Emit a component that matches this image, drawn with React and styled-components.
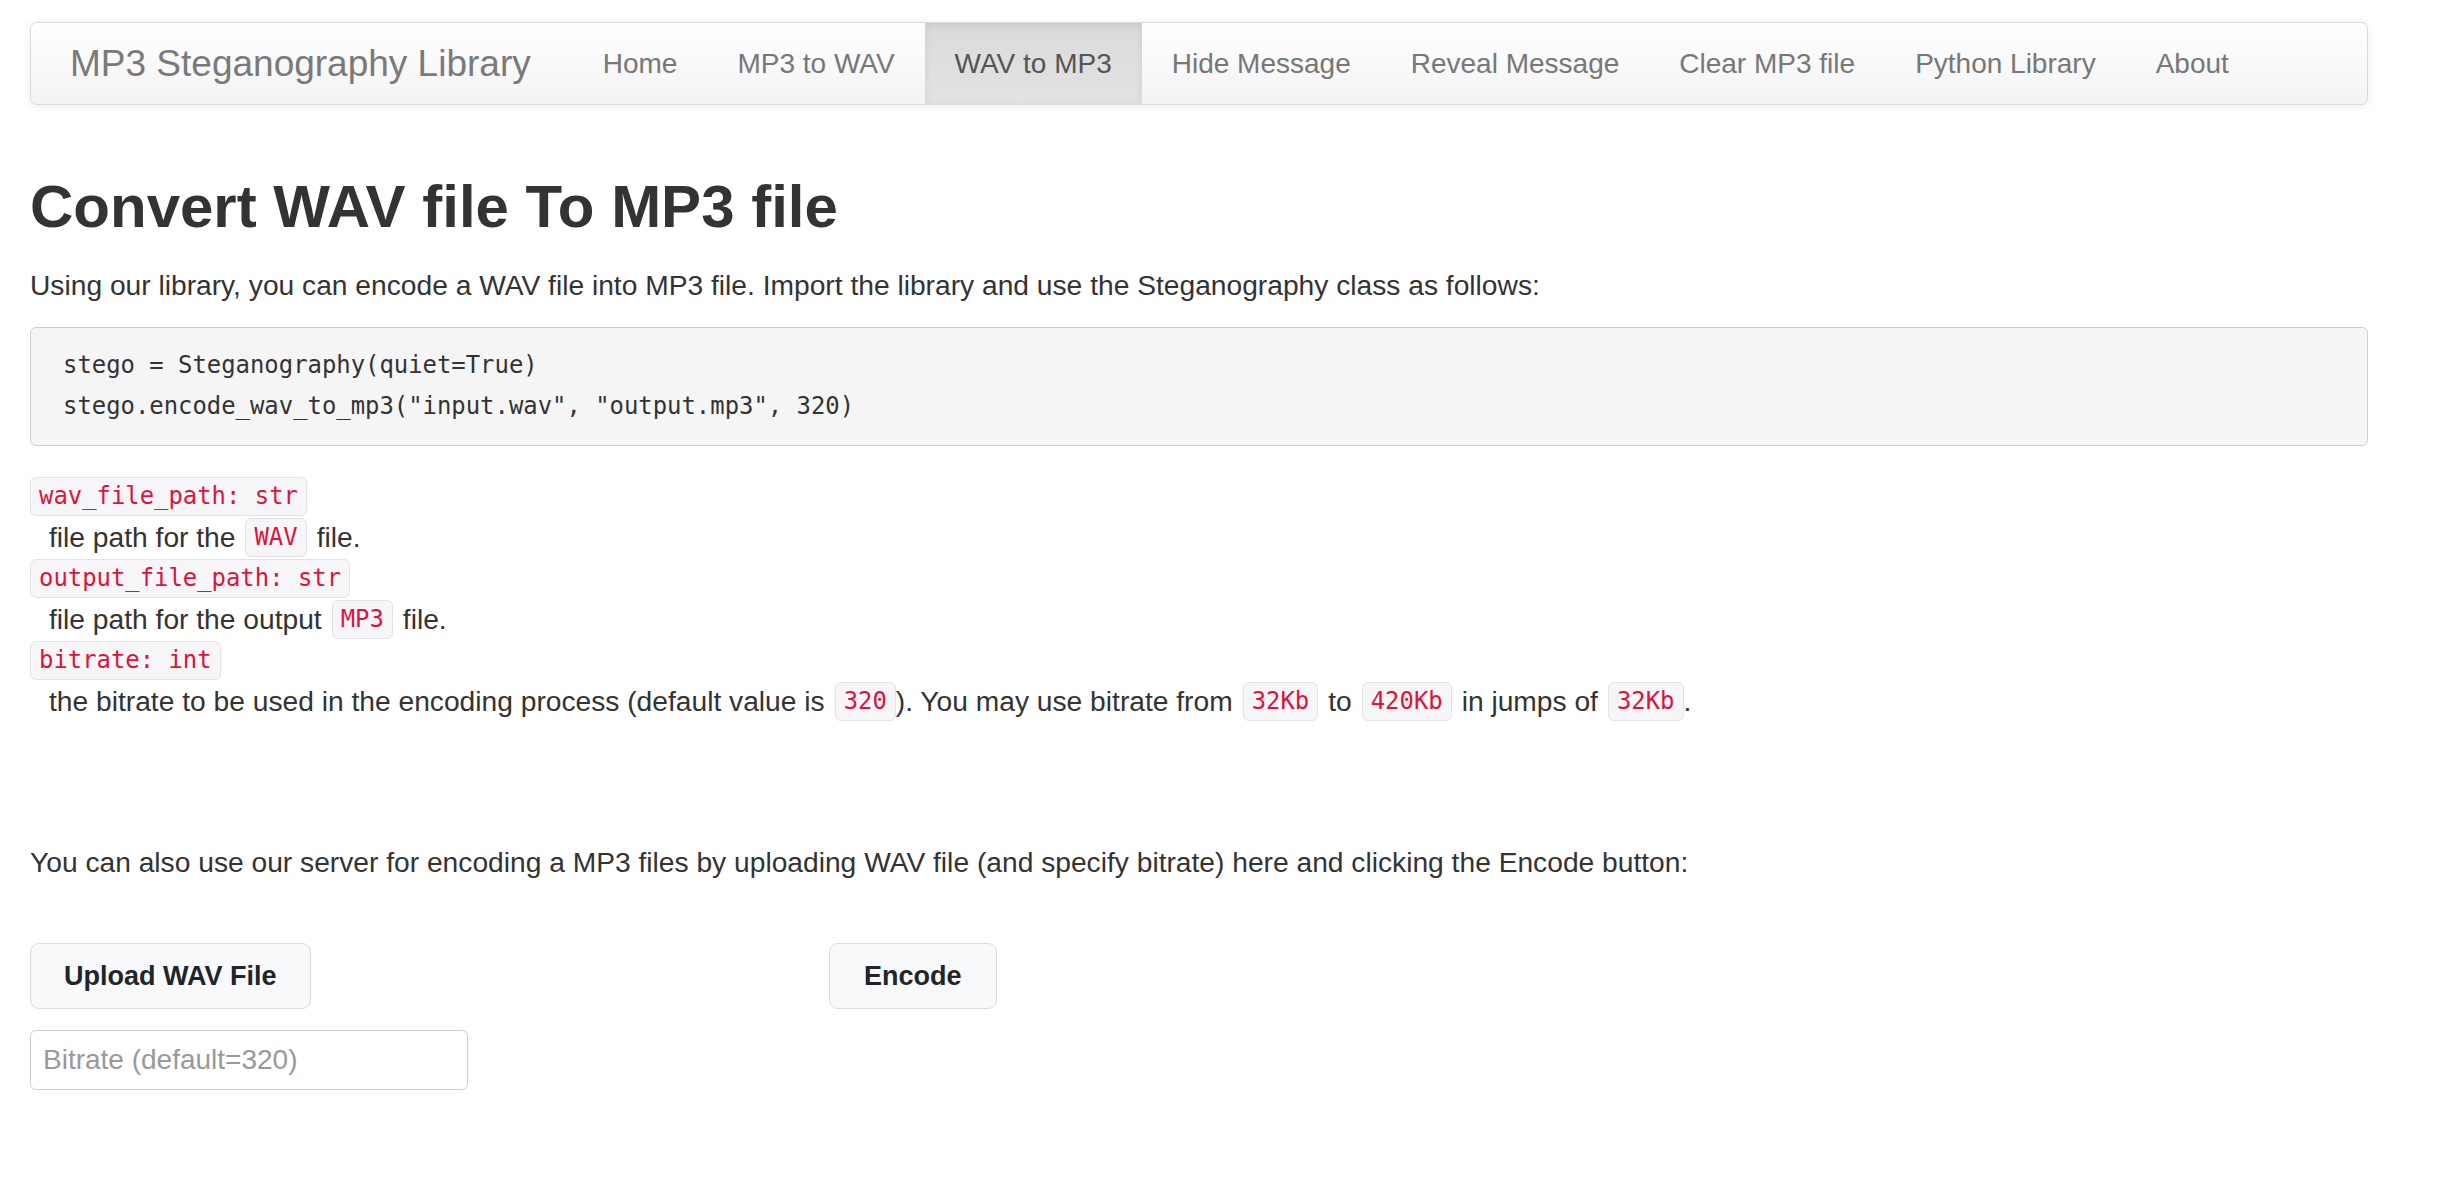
import React from "react";
import styled, { createGlobalStyle } from "styled-components";

const GlobalStyle = createGlobalStyle`
  html, body {
    margin: 0;
    padding: 0;
    background: #ffffff;
  }
  body {
    font-family: "Liberation Sans", Helvetica, Arial, sans-serif;
    color: #333333;
    font-size: 28px;
  }
  * { box-sizing: border-box; }
`;

const Page = styled.div`
  padding: 22px 76px 60px 30px;
`;

const Navbar = styled.nav`
  display: flex;
  align-items: stretch;
  height: 83px;
  border: 1.5px solid #d9d9d9;
  border-radius: 7px;
  background: linear-gradient(to bottom, #ffffff 0%, #f3f3f3 100%);
  box-shadow: 0 1.5px 8px rgba(0, 0, 0, 0.075);
  overflow: hidden;
`;

const Brand = styled.a`
  display: flex;
  align-items: center;
  padding-left: 39px;
  margin-right: 42px;
  font-size: 37px;
  font-weight: 300;
  color: #7a7a7a;
  text-decoration: none;
  white-space: nowrap;
`;

const NavList = styled.ul`
  display: flex;
  align-items: stretch;
  list-style: none;
  margin: 0;
  padding: 0;
`;

const NavItem = styled.li`
  display: flex;
  align-items: center;
  padding: 0 30px;
  font-size: 28px;
  white-space: nowrap;
  color: ${(p) => (p.$active ? "#555555" : "#777777")};
  background: ${(p) =>
    p.$active ? "linear-gradient(to bottom, #dbdbdb 0%, #e2e2e2 100%)" : "transparent"};
  box-shadow: ${(p) => (p.$active ? "inset 0 3px 9px rgba(0, 0, 0, 0.075)" : "none")};
`;

const Main = styled.main`
  display: flex;
  flex-direction: column;
`;

const Title = styled.h1`
  margin: 70px 0 0;
  font-size: 60px;
  line-height: 64px;
  font-weight: 700;
  color: #333333;
`;

const Paragraph = styled.p`
  margin: ${(p) => p.$margin || "0"};
  font-size: 28.2px;
  line-height: 41px;
  color: #333333;
`;

const CodeBlock = styled.pre`
  margin: 21.5px 0 0;
  padding: 17px 32px 18px;
  background: #f5f5f5;
  border: 1.5px solid #cccccc;
  border-radius: 6px;
  font-family: "DejaVu Sans Mono", Menlo, monospace;
  font-size: 23.9px;
  line-height: 41px;
  color: #333333;
  white-space: pre;
`;

const DefList = styled.div`
  display: flex;
  flex-direction: column;
  margin-top: 29.5px;
`;

const DefLine = styled.div`
  height: 41px;
  line-height: 41px;
  padding-left: ${(p) => (p.$indent ? "19px" : "0")};
  font-size: 28.2px;
  white-space: nowrap;
  display: flex;
  align-items: center;
`;

const Word = styled.span`
  margin: ${(p) => p.$margin || "0"};
`;

const Code = styled.code`
  display: inline-flex;
  align-items: center;
  height: 39px;
  padding: 0 8px;
  background: #f6f6f8;
  border: 1.5px solid #e2e2e8;
  border-radius: 6px;
  font-family: "DejaVu Sans Mono", Menlo, monospace;
  font-size: 23.9px;
  color: #dc143c;
`;

const Actions = styled.div`
  display: grid;
  grid-template-columns: 799px max-content;
  row-gap: 21px;
  margin-top: 60.5px;
  align-items: start;
`;

const Button = styled.button`
  justify-self: start;
  height: 66px;
  padding: 0 ${(p) => p.$pad || "33px"};
  background: #f8f9fa;
  border: 1.5px solid #d9dadb;
  border-radius: 9px;
  font-family: "Liberation Sans", Helvetica, Arial, sans-serif;
  font-size: 27px;
  font-weight: 700;
  color: #212529;
  cursor: pointer;
`;

const Input = styled.input`
  width: 438px;
  height: 60px;
  padding: 0 12px;
  border: 1.5px solid #cccccc;
  border-radius: 6px;
  font-family: "Liberation Sans", Helvetica, Arial, sans-serif;
  font-size: 28px;
  color: #555555;
  &::placeholder {
    color: #999999;
  }
`;

const navItems = [
  "Home",
  "MP3 to WAV",
  "WAV to MP3",
  "Hide Message",
  "Reveal Message",
  "Clear MP3 file",
  "Python Library",
  "About",
];

export default function App() {
  return (
    <>
      <GlobalStyle />
      <Page>
        <Navbar>
          <Brand href="#">MP3 Steganography Library</Brand>
          <NavList>
            {navItems.map((item) => (
              <NavItem key={item} $active={item === "WAV to MP3"}>
                {item}
              </NavItem>
            ))}
          </NavList>
        </Navbar>
        <Main>
          <Title>Convert WAV file To MP3 file</Title>
          <Paragraph $margin="25.5px 0 0">
            Using our library, you can encode a WAV file into MP3 file. Import the library and use the
            Steganography class as follows:
          </Paragraph>
          <CodeBlock>
            {`stego = Steganography(quiet=True)
stego.encode_wav_to_mp3("input.wav", "output.mp3", 320)`}
          </CodeBlock>
          <DefList>
            <DefLine>
              <Code>wav_file_path: str</Code>
            </DefLine>
            <DefLine $indent>
              <Word $margin="0 10px 0 0">file path for the</Word>
              <Code>WAV</Code>
              <Word $margin="0 0 0 10px">file.</Word>
            </DefLine>
            <DefLine>
              <Code>output_file_path: str</Code>
            </DefLine>
            <DefLine $indent>
              <Word $margin="0 10px 0 0">file path for the output</Word>
              <Code>MP3</Code>
              <Word $margin="0 0 0 10px">file.</Word>
            </DefLine>
            <DefLine>
              <Code>bitrate: int</Code>
            </DefLine>
            <DefLine $indent>
              <Word $margin="0 10px 0 0">the bitrate to be used in the encoding process (default value is</Word>
              <Code>320</Code>
              <Word $margin="0 10px 0 0">). You may use bitrate from</Word>
              <Code>32Kb</Code>
              <Word $margin="0 10px">to</Word>
              <Code>420Kb</Code>
              <Word $margin="0 10px">in jumps of</Word>
              <Code>32Kb</Code>
              <Word>.</Word>
            </DefLine>
          </DefList>
          <Paragraph $margin="120px 0 0">
            You can also use our server for encoding a MP3 files by uploading WAV file (and specify bitrate) here
            and clicking the Encode button:
          </Paragraph>
          <Actions>
            <Button>Upload WAV File</Button>
            <Button $pad="34px">Encode</Button>
            <Input placeholder="Bitrate (default=320)" />
          </Actions>
        </Main>
      </Page>
    </>
  );
}
